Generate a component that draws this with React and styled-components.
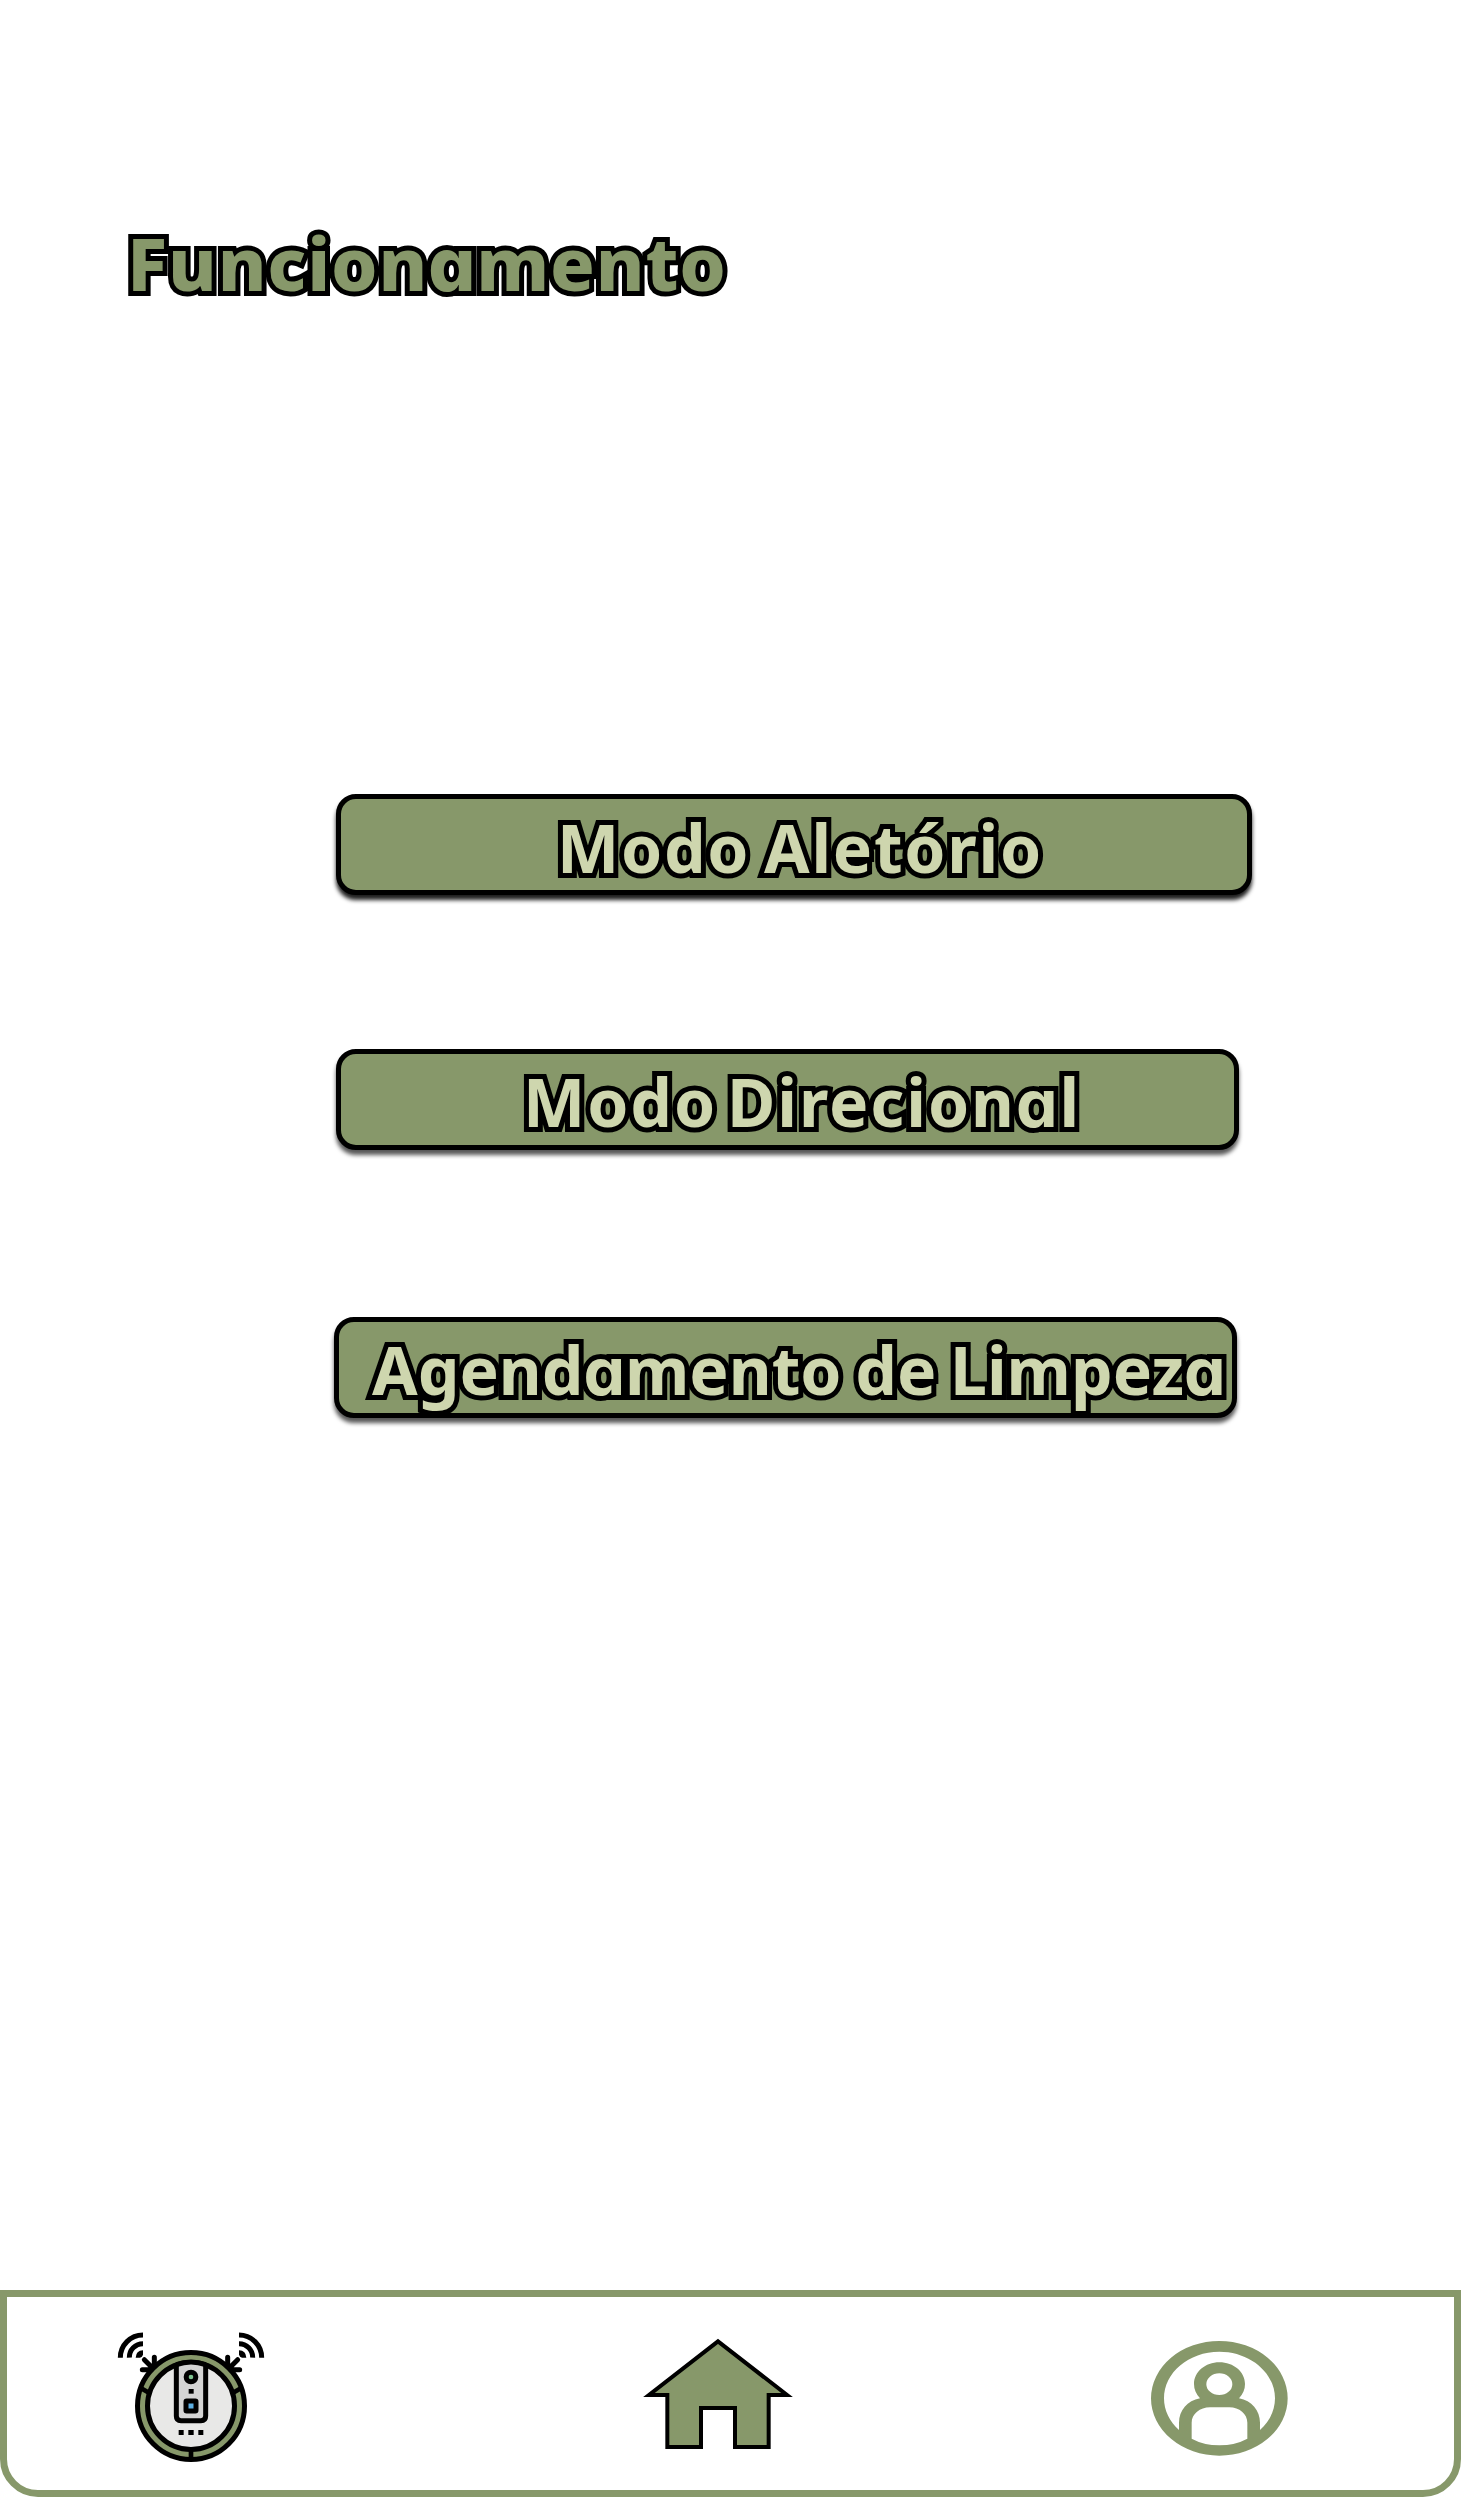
import React from 'react';
import styled, { createGlobalStyle } from 'styled-components';

const GlobalStyle = createGlobalStyle`
  *, *::before, *::after { box-sizing: border-box; }
  body { margin: 0; background: #fff; }
`;

const Screen = styled.div`
  display: flex;
  flex-direction: column;
  width: 1461px;
  height: 2497px;
  overflow: hidden;
  background: #fff;
  font-family: "Noto Sans", "Open Sans", sans-serif;
`;

const Title = styled.h1`
  margin: 209px 0 0 127px;
  height: 108px;
  font-size: 74px;
  line-height: 108px;
  font-weight: 780;
  letter-spacing: ${p => p.$spacing}px;
  white-space: nowrap;
  color: #87986a;
  -webkit-text-stroke: 10px #000;
  paint-order: stroke fill;
`;

const Modes = styled.main`
  display: flex;
  flex-direction: column;
  align-items: flex-start;
  margin-top: 477px;
  padding-left: 334px;
`;

const ModeButton = styled.button`
  display: flex;
  align-items: center;
  width: ${p => p.$width}px;
  height: 101px;
  margin: ${p => p.$top}px 0 0 ${p => p.$left}px;
  padding: 4px 0 0 ${p => p.$indent}px;
  border: 5px solid #000;
  border-radius: 20px;
  background: #87986a;
  box-shadow: 0 5px 4px rgba(0, 0, 0, ${p => p.$shadow});
  font-family: inherit;
  font-size: 66px;
  line-height: 86px;
  font-weight: 750;
  letter-spacing: ${p => p.$spacing}px;
  word-spacing: ${p => p.$word}px;
  white-space: nowrap;
  color: #ced6ae;
  -webkit-text-stroke: 10px #000;
  paint-order: stroke fill;
`;

const RoundA = styled.span`
  font-family: Inter, sans-serif;
  font-feature-settings: "cv11";
`;

const Label = styled.span`
  display: block;
`;

const TabBar = styled.nav`
  display: flex;
  align-items: flex-start;
  height: 207px;
  margin-top: auto;
  padding: 13px 0 0 93px;
  border: 7px solid #87986a;
  border-radius: 0 0 38px 38px;
`;

const Tab = styled.a`
  display: block;
  margin-left: ${p => p.$gap}px;
  padding-top: ${p => p.$drop || 0}px;
  svg { display: block; }
`;

const Lettering = ({ children }) =>
  children.split(/(a)/).map((part, i) => (part === 'a' ? <RoundA key={i}>a</RoundA> : part));

const RobotIcon = () => (
  <svg width="180" height="170" viewBox="0 0 540 510" fill="none" stroke="#000">
    <circle cx="273" cy="288" r="160.5" fill="#87986a" strokeWidth="15" />
    <circle cx="273" cy="288" r="130.5" fill="#e8e8e7" strokeWidth="15" />
    <path d="M229 166V318q0 14 14 14H303q14 0 14-14V166Q273 148 229 166Z" fill="#d4d4d4" stroke="none" />
    <path d="M229 164V318q0 14 14 14H303q14 0 14-14V164" strokeWidth="15" />
    <path d="M229 164Q273 148 317 164" strokeWidth="15" />
    <circle cx="273" cy="201" r="14.5" fill="#7cc08d" strokeWidth="15" />
    <rect x="258" y="273" width="30" height="30" rx="2" fill="#5db0e4" strokeWidth="15" />
    <g fill="#000" stroke="none">
      <rect x="266" y="237" width="15" height="14" />
      <rect x="236" y="360" width="15" height="15" />
      <rect x="265" y="360" width="16" height="15" />
      <rect x="295" y="360" width="15" height="15" />
    </g>
    <path d="M273 418V450M122 234L148 249M424 234L398 249" strokeWidth="14" />
    <g strokeWidth="15" strokeLinecap="round">
      <path d="M133 149L157 173M163 142V166M127 179H153" />
      <path d="M413 149L389 173M383 142V166M419 179H393" />
    </g>
    <g strokeWidth="15">
      <path d="M61 143A68 68 0 0 1 129 75M88 143A41 41 0 0 1 129 101" />
      <path d="M485 143A68 68 0 0 0 417 75M458 143A41 41 0 0 0 417 101" />
    </g>
    <path d="M107 143Q108 122 129 121V134Q127 141 120 143ZM439 143Q438 122 417 121V134Q419 141 426 143Z" fill="#000" stroke="none" />
  </svg>
);

const HomeIcon = () => (
  <svg width="200" height="160" viewBox="0 0 600 480">
    <path d="M294 94L501 255H446V411H345V294H243V411H142V255H87Z" fill="#87986a" stroke="#000" strokeWidth="12" strokeMiterlimit="10" />
  </svg>
);

const ProfileIcon = () => (
  <svg width="180" height="160" viewBox="0 0 540 480">
    <path
      fill="#87986a"
      fillRule="evenodd"
      d="M268 63A205 172 0 1 1 268 407A205 172 0 1 1 268 63ZM147 330V308C147 272 172 242 210 235C198 222 192 208 192 192C192 156 226 127 268 127C311 127 345 156 345 192C345 208 339 222 327 235C365 242 390 272 390 308V330C418 305 435 272 435 235C435 158 360 95 268 95C176 95 102 158 102 235C102 272 119 305 147 330ZM268 160A39 32.5 0 1 0 268 225A39 32.5 0 1 0 268 160ZM185 356Q222 376 268 376Q315 376 352 356V308C352 282 328 262 298 262H240C210 262 185 282 185 308Z"
    />
  </svg>
);

export default function App() {
  return (
    <Screen>
      <GlobalStyle />
      <Title $spacing={0.85}><Lettering>Funcionamento</Lettering></Title>
      <Modes>
        <ModeButton $width={916} $left={2} $top={0} $indent={216} $spacing={1.7} $word={-5} $shadow={0.88}>
          <Label><Lettering>Modo Aletório</Lettering></Label>
        </ModeButton>
        <ModeButton $width={903} $left={2} $top={154} $indent={182} $spacing={1.9} $word={-9} $shadow={0.66}>
          <Label><Lettering>Modo Direcional</Lettering></Label>
        </ModeButton>
        <ModeButton $width={903} $left={0} $top={167} $indent={33} $spacing={0} $word={-3.5} $shadow={0.66}>
          <Label><Lettering>Agendamento de Limpeza</Lettering></Label>
        </ModeButton>
      </Modes>
      <TabBar>
        <Tab $gap={0}><RobotIcon /></Tab>
        <Tab $gap={340}><HomeIcon /></Tab>
        <Tab $gap={310} $drop={10}><ProfileIcon /></Tab>
      </TabBar>
    </Screen>
  );
}
